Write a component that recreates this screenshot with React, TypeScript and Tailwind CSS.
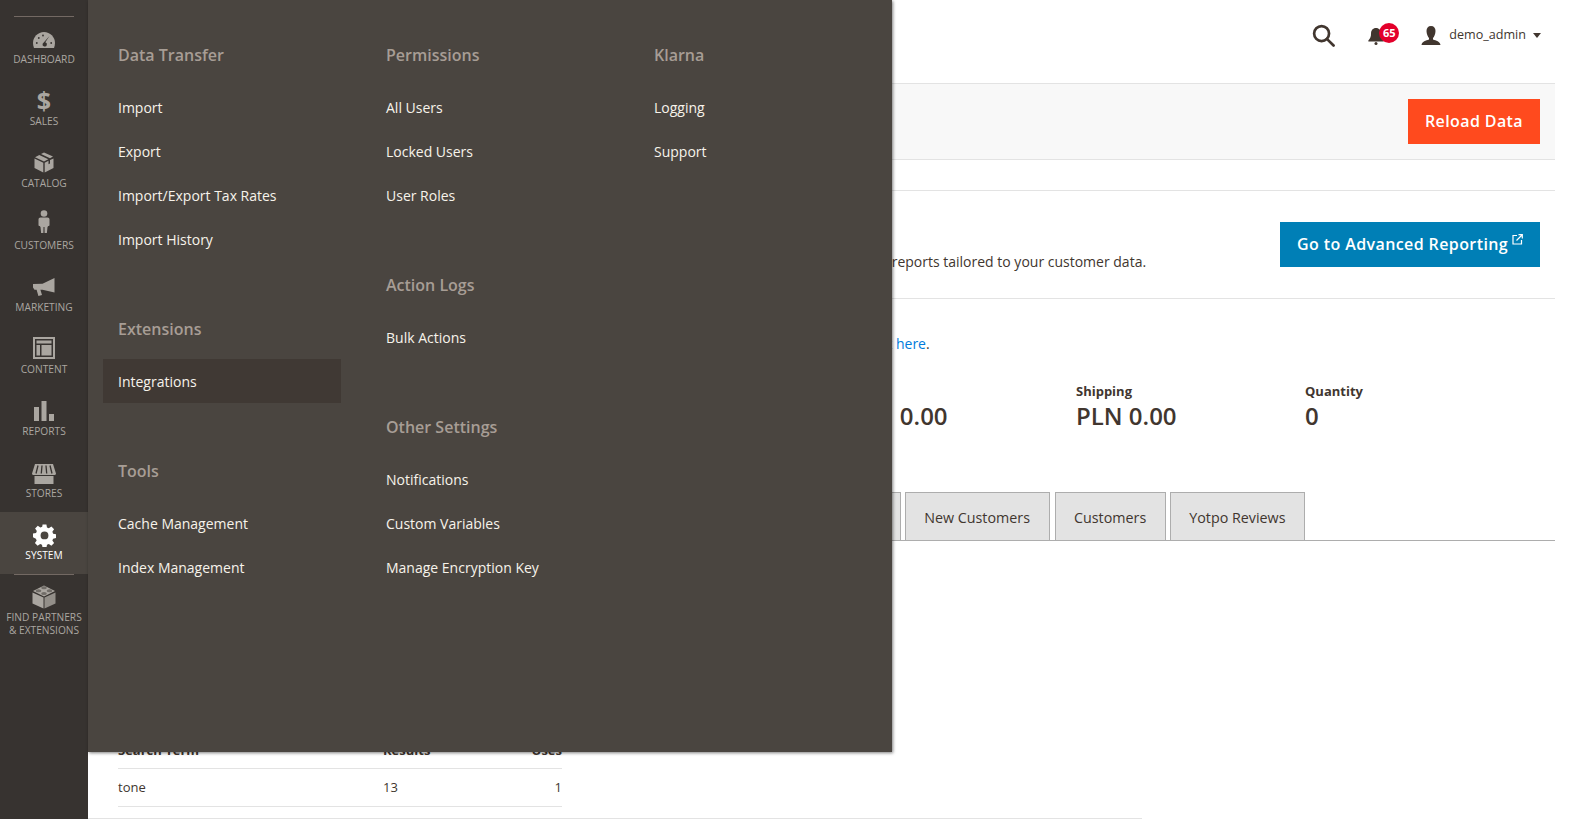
import React from "react";

const fontStack = "font-['Open_Sans',sans-serif]";

const DashboardIcon = () => (
  <svg width="22" height="16" viewBox="0 0 22 16" fill="currentColor">
    <path d="M11 0C4.800 0 0 5 0 11c0 1.800.4 3.500 1 5h20c.6-1.500 1-3.200 1-5C22 5 17.200 0 11 0z" />
    <path d="M16.500 4l-4.200 6.200a2.200 2.200 0 1 1-2.700 1.500z" fill="#373330" />
    <circle cx="3.800" cy="11" r="0.900" fill="#373330" />
    <circle cx="5.800" cy="6" r="0.900" fill="#373330" />
    <circle cx="10" cy="3.500" r="0.900" fill="#373330" />
    <circle cx="18.200" cy="11" r="0.900" fill="#373330" />
  </svg>
);

const CatalogIcon = () => (
  <svg width="20" height="21" viewBox="0 0 20 21" fill="currentColor">
    <path d="M10 0.500l9 4-3 1.800-9-4.200zM5.300 3l9 4.300L10 9.500 1 5.200z" />
    <path d="M0.500 6.500l8.800 4.200V20.500L0.500 16zM19.500 6.500v9.500l-8.800 4.500V10.700l3.800-1.900v3.500l1.500-.8V8.100z" />
  </svg>
);

const CustomersIcon = () => (
  <svg width="12" height="24" viewBox="0 0 12 24" fill="currentColor">
    <circle cx="6" cy="3.500" r="3.300" />
    <path d="M2.500 7.500h7c1.200 0 2 .8 2 2v5.500c0 .6-.4 1-1.200 1l-.8 1-.6 6H6.600l-.1-6h-1l-.1 6H3.100l-.6-6-.8-1C.9 16 .5 15.600 .5 15V9.500c0-1.200.8-2 2-2z" />
  </svg>
);

const MarketingIcon = () => (
  <svg width="22" height="18" viewBox="0 0 22 18" fill="currentColor">
    <path d="M21.500 0v14.500L9.500 11.700H7.400l1.600 5.300-3.600 1-1.800-6.300H1.500L0 9.500l0-3.500 9.500-.3z" />
  </svg>
);

const ContentIcon = () => (
  <svg width="22" height="22" viewBox="0 0 22 22" fill="none">
    <rect x="1" y="1" width="20" height="20" stroke="currentColor" strokeWidth="2" />
    <rect x="3.500" y="3.500" width="15" height="3" fill="currentColor" />
    <rect x="3.500" y="8" width="3.500" height="10.500" fill="currentColor" />
    <rect x="8.500" y="8" width="10" height="10.500" fill="currentColor" />
  </svg>
);

const ReportsIcon = () => (
  <svg width="20" height="20" viewBox="0 0 20 20" fill="currentColor">
    <rect x="0" y="6" width="5" height="14" />
    <rect x="7.500" y="0" width="5" height="20" />
    <rect x="15" y="13" width="5" height="7" />
  </svg>
);

const StoresIcon = () => (
  <svg width="24" height="20" viewBox="0 0 24 20" fill="currentColor">
    <path d="M3 0h18l3 9.500c0 1-.9 1.500-2 1.500H2c-1.100 0-2-.5-2-1.500z" />
    <path d="M6 1.500L4 9.500M10 1.500L9.300 9.500M14 1.500l.7 8M18 1.500l2 8" stroke="#373330" strokeWidth="1.300" />
    <rect x="2.500" y="12" width="19" height="8" />
  </svg>
);

const SystemIcon = () => (
  <svg width="23" height="23" viewBox="0 0 24 24" fill="currentColor">
    <path
      fillRule="evenodd"
      d="M10 0.500h4l.6 3.200 1.900.8 2.700-1.800 2.800 2.800-1.800 2.700.8 1.900 3.200.6v4l-3.200.6-.8 1.900 1.800 2.700-2.800 2.800-2.700-1.800-1.900.8-.6 3.200h-4l-.6-3.200-1.900-.8-2.700 1.800-2.800-2.800 1.800-2.700-.8-1.900L0 13.900v-4l3.200-.6.8-1.900-1.800-2.700 2.800-2.800 2.700 1.800 1.900-.8zM12 7.800a4.100 4.100 0 1 0 0 8.200 4.100 4.100 0 0 0 0-8.200z"
    />
  </svg>
);

const PartnersIcon = () => (
  <svg width="24" height="24" viewBox="0 0 24 24" fill="currentColor">
    <path d="M0.500 7.500l11 5v11l-11-5z" />
    <path d="M23.500 7.500l-11 5v11l11-5z" opacity="0.8" />
    <path d="M12 0.500L23 6l-11 5.500L1 6z" />
    <ellipse cx="12" cy="2.800" rx="2.800" ry="1.500" fill="#373330" opacity="0.5" />
    <ellipse cx="6.500" cy="5.800" rx="2.800" ry="1.500" fill="#373330" opacity="0.5" />
    <ellipse cx="17.500" cy="5.800" rx="2.800" ry="1.500" fill="#373330" opacity="0.5" />
    <ellipse cx="12" cy="8.600" rx="2.800" ry="1.500" fill="#373330" opacity="0.5" />
  </svg>
);

const navItems = [
  { label: "Dashboard", icon: <DashboardIcon />, shift: "" },
  { label: "Sales", icon: <span className="text-[25px] font-bold leading-none">$</span>, shift: "-translate-y-0.5" },
  { label: "Catalog", icon: <CatalogIcon />, shift: "-translate-y-0.5" },
  { label: "Customers", icon: <CustomersIcon />, shift: "-translate-y-1" },
  { label: "Marketing", icon: <MarketingIcon />, shift: "-translate-y-px" },
  { label: "Content", icon: <ContentIcon />, shift: "-translate-y-0.5" },
  { label: "Reports", icon: <ReportsIcon />, shift: "-translate-y-px" },
  { label: "Stores", icon: <StoresIcon />, shift: "" },
];

const menuColumns = [
  [
    { title: "Data Transfer", items: ["Import", "Export", "Import/Export Tax Rates", "Import History"] },
    { title: "Extensions", items: ["Integrations"] },
    { title: "Tools", items: ["Cache Management", "Index Management"] },
  ],
  [
    { title: "Permissions", items: ["All Users", "Locked Users", "User Roles"] },
    { title: "Action Logs", items: ["Bulk Actions"] },
    { title: "Other Settings", items: ["Notifications", "Custom Variables", "Manage Encryption Key"] },
  ],
  [{ title: "Klarna", items: ["Logging", "Support"] }],
];

function Sidebar() {
  return (
    <aside className="w-[88px] shrink-0 h-full bg-[#373330] pt-4">
      <div className="mx-[14px] h-px -mb-px bg-[#736963]" />
      {navItems.map((item) => (
        <div key={item.label} className="h-[62px] pt-3 flex flex-col items-center text-[#aaa6a0]">
          <div className={`h-6 flex items-center justify-center ${item.shift}`}>{item.icon}</div>
          <span className="mt-px text-[10.2px] leading-[13px] uppercase">{item.label}</span>
        </div>
      ))}
      <div className="h-[62px] pt-3 flex flex-col items-center bg-[#4a4540] text-white">
        <div className="h-6 flex items-center justify-center -translate-y-px">
          <SystemIcon />
        </div>
        <span className="mt-px text-[10.2px] leading-[13px] uppercase">System</span>
      </div>
      <div className="mx-[14px] h-px bg-[#736963]" />
      <div className="pt-[11px] flex flex-col items-center text-[#aaa6a0]">
        <div className="h-6 flex items-center justify-center -translate-y-px">
          <PartnersIcon />
        </div>
        <span className="mt-px text-[10.2px] leading-[13px] uppercase text-center">
          Find Partners
          <br />& Extensions
        </span>
      </div>
    </aside>
  );
}

function SystemMenu() {
  return (
    <div className="absolute left-[88px] top-0 w-[804px] h-[752px] z-10 bg-[#4a4540] pt-10 pl-[15px] flex shadow-[1px_1px_3px_rgba(0,0,0,0.5)]">
      {menuColumns.map((col, i) => (
        <div key={i} className="w-[268px] shrink-0 flex flex-col gap-[52px]">
          {col.map((section) => (
            <div key={section.title}>
              <div className="h-[30px] pl-[15px] mb-4 text-base leading-[30px] font-semibold text-[#a79d95]">
                {section.title}
              </div>
              {section.items.map((name) => (
                <div
                  key={name}
                  className={`w-[238px] h-11 pl-[15px] text-sm text-[#f7f3eb] ${
                    name === "Integrations" ? "-mt-px mb-px leading-[46px] bg-[#403934]" : "leading-[44px]"
                  }`}
                >
                  {name}
                </div>
              ))}
            </div>
          ))}
        </div>
      ))}
    </div>
  );
}

function Header() {
  return (
    <header className="h-[84px] shrink-0 border-b border-[#e3e3e3] flex items-center justify-end pb-[13px] pr-[14px]">
      <svg width="23" height="23" viewBox="0 0 24 24" fill="none" stroke="#41362f" strokeWidth="2.800" className="mr-[32px]">
        <circle cx="10" cy="10" r="7.800" />
        <path d="M15.500 15.500l7 7" strokeLinecap="round" />
      </svg>
      <div className="relative w-[18px] h-[18px] mt-px mr-[36px]">
        <svg width="18" height="18" viewBox="0 0 20 20" fill="#41362f">
          <path d="M10 1c-3.500 0-5.500 2.700-5.500 6 0 4-1 6-3 8v1h17v-1c-2-2-3-4-3-8 0-3.300-2-6-5.500-6z" />
          <circle cx="10" cy="18.300" r="1.700" />
        </svg>
        <span className="absolute left-[12px] -top-[4px] w-5 h-5 rounded-full bg-[#e3002b] text-white text-[11px] font-bold leading-5 text-center">
          65
        </span>
      </div>
      <svg width="20" height="19" viewBox="0 0 20 19" fill="#41362f" className="mr-2">
        <path d="M10 0c3 0 4.500 2 4.500 5s-1.500 6-2.500 7v1.500c3 1 7 2 7.500 5.500H.5C1 15.500 5 14.500 8 13.500V12C7 11 5.500 8 5.500 5S7 0 10 0z" />
      </svg>
      <span className="text-[12.6px] text-[#41362f]">demo_admin</span>
      <span className="ml-[7px] w-0 h-0 border-x-[4px] border-x-transparent border-t-[5px] border-t-[#41362f]" />
    </header>
  );
}

function Dashboard() {
  const stats = [
    { label: "Revenue", value: "PLN 0.00" },
    { label: "Tax", value: "PLN 0.00" },
    { label: "Shipping", value: "PLN 0.00" },
    { label: "Quantity", value: "0" },
  ];
  const tabs = ["Bestsellers", "Most Viewed Products", "New Customers", "Customers", "Yotpo Reviews"];

  return (
    <main className="w-[1467px] h-full flex flex-col text-[#41362f] overflow-hidden">
      <Header />
      <div className="h-[76px] shrink-0 bg-[#f8f8f8] border-b border-[#e3e3e3] flex items-center justify-end pr-[15px]">
        <button className="w-[132px] h-[45px] pb-0.5 bg-[#ff4a1e] text-white text-base font-semibold tracking-[0.4px]">
          Reload Data
        </button>
      </div>
      <div className="h-[31px] shrink-0 border-b border-[#e3e3e3]" />
      <section className="h-[108px] shrink-0 border-b border-[#e3e3e3] pl-[29px] pr-[15px] flex justify-between pt-[31px]">
        <p className="mt-[30px] text-sm leading-[19px] whitespace-nowrap">
          Gain new insights and take command of your business' performance, using our dynamic product, order, and customer reports tailored to your customer data.
        </p>
        <button className="relative w-[260px] h-[45px] pb-0.5 bg-[#007fb6] text-white text-base font-semibold tracking-[0.4px] text-left pl-[17px]">
          Go to Advanced Reporting
          <svg width="11" height="11" viewBox="0 0 11 11" fill="none" stroke="white" strokeWidth="1.200" className="absolute right-[17px] top-[12px]">
            <path d="M5 1.500H1v8.500h8.500V6" />
            <path d="M4.500 6.500L10 1M6.500.7h3.800v3.800" />
          </svg>
        </button>
      </section>
      <p className="mt-[35px] pl-[527px] text-sm leading-[19px] whitespace-nowrap">
        Chart is disabled. To enable the chart, click <span className="text-[#007bdb]">here</span>.
      </p>
      <div className="mt-[30px] flex pl-[530px]">
        {stats.map((s) => (
          <div key={s.label} className="w-[229px] shrink-0">
            <div className="text-[13px] leading-4 font-bold">{s.label}</div>
            <div className="text-[24px] leading-[34px] font-semibold">{s.value}</div>
          </div>
        ))}
      </div>
      <div className="mt-[59px] h-[49px] shrink-0 flex justify-end gap-1 pr-[250px] border-b border-[#adadad]">
        {tabs.map((t) => (
          <div
            key={t}
            className={`h-[49px] px-[18.5px] border border-[#adadad] bg-[#e3e3e3] text-[14.3px] leading-[50px] whitespace-nowrap ${
              t === "New Customers" ? "mr-px" : ""
            }`}
          >
            {t}
          </div>
        ))}
      </div>
      <div className="mt-[200px] ml-[30px] w-[444px] text-[13px]">
        <div className="flex h-[28px] font-bold border-b border-[#e3e3e3]">
          <span className="w-[265px]">Search Term</span>
          <span className="flex-1">Results</span>
          <span>Uses</span>
        </div>
        <div className="flex h-[38px] items-center border-b border-[#e3e3e3]">
          <span className="w-[265px]">tone</span>
          <span className="flex-1">13</span>
          <span>1</span>
        </div>
      </div>
      <div className="mt-[11px] h-px w-[1054px] bg-[#e3e3e3] shrink-0" />
    </main>
  );
}

export default function App() {
  return (
    <div className={`relative h-screen w-full flex overflow-hidden bg-white ${fontStack}`}>
      <Sidebar />
      <Dashboard />
      <SystemMenu />
    </div>
  );
}
